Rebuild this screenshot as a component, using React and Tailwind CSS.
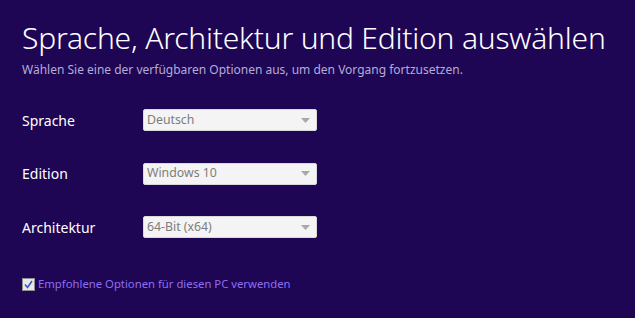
const fields = [
  { label: "Sprache", value: "Deutsch" },
  { label: "Edition", value: "Windows 10" },
  { label: "Architektur", value: "64-Bit (x64)" },
];

const Select = ({ value }) => (
  <div className="flex h-[22px] w-[174px] items-center justify-between rounded-[2px] border border-[#d9d9d9] bg-[#f4f4f4] pl-[3px] pr-[6px]">
    <span className="text-[12.3px] text-[#7d7d7d]">{value}</span>
    <svg width="9" height="5" viewBox="0 0 9 5">
      <path d="M0 0h9L4.5 5z" fill="#a8a8a8" />
    </svg>
  </div>
);

export default function App() {
  return (
    <div className="h-[318px] w-[635px] overflow-hidden bg-[#1e0654] pl-[22px] pt-[18px] font-['Noto_Sans',sans-serif] text-white">
      <h1 className="text-[30px] font-light leading-[40px] tracking-[-0.2px]">
        Sprache, Architektur und Edition auswählen
      </h1>
      <p className="mt-[5px] text-[12px] leading-[14px] text-[#b5acd8]">
        Wählen Sie eine der verfügbaren Optionen aus, um den Vorgang fortzusetzen.
      </p>

      <div className="mt-[32px] flex flex-col gap-[31.5px]">
        {fields.map((f) => (
          <div key={f.label} className="flex items-center">
            <span className="w-[121px] text-[14px]">{f.label}</span>
            <Select value={f.value} />
          </div>
        ))}
      </div>

      <label className="mt-[38px] flex items-center gap-[3px]">
        <span className="flex h-[13px] w-[13px] items-center justify-center border border-[#8e8e8e] bg-[#e8e8e8]">
          <svg width="9" height="9" viewBox="0 0 9 9">
            <path d="M1 4.5l2.5 3L8 1" fill="none" stroke="#3a57c4" strokeWidth="1.6" />
          </svg>
        </span>
        <span className="text-[11.3px] text-[#8d6ef3]">
          Empfohlene Optionen für diesen PC verwenden
        </span>
      </label>
    </div>
  );
}
